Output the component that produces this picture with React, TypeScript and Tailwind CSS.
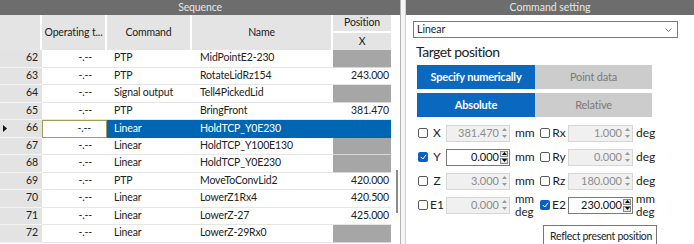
import React from 'react';

const ROWS = [
  { n: 62, cmd: 'PTP', name: 'MidPointE2-230', pos: null },
  { n: 63, cmd: 'PTP', name: 'RotateLidRz154', pos: '243.000' },
  { n: 64, cmd: 'Signal output', name: 'Tell4PickedLid', pos: null },
  { n: 65, cmd: 'PTP', name: 'BringFront', pos: '381.470' },
  { n: 66, cmd: 'Linear', name: 'HoldTCP_Y0E230', pos: '', selected: true },
  { n: 67, cmd: 'Linear', name: 'HoldTCP_Y100E130', pos: null },
  { n: 68, cmd: 'Linear', name: 'HoldTCP_Y0E230', pos: null },
  { n: 69, cmd: 'PTP', name: 'MoveToConvLid2', pos: '420.000' },
  { n: 70, cmd: 'Linear', name: 'LowerZ1Rx4', pos: '420.500' },
  { n: 71, cmd: 'Linear', name: 'LowerZ-27', pos: '425.000' },
  { n: 72, cmd: 'Linear', name: 'LowerZ-29Rx0', pos: null },
];

// tiny up/down spinner inside a numeric box
const Spinner: React.FC<{ enabled?: boolean }> = ({ enabled }) => (
  <div className="flex flex-col h-full w-[9px] justify-center gap-[1px] pr-[1px]">
    <div className={`h-[6px] flex items-center justify-center ${enabled ? 'bg-[#e6e6e6] border border-[#8a8a8a]' : ''}`}>
      <svg width="5" height="3" viewBox="0 0 5 3">
        <path d="M0 3 L2.5 0 L5 3 Z" fill={enabled ? '#000' : '#9a9a9a'} />
      </svg>
    </div>
    <div className={`h-[6px] flex items-center justify-center ${enabled ? 'bg-[#e6e6e6] border border-[#8a8a8a]' : ''}`}>
      <svg width="5" height="3" viewBox="0 0 5 3">
        <path d="M0 0 L2.5 3 L5 0 Z" fill={enabled ? '#000' : '#9a9a9a'} />
      </svg>
    </div>
  </div>
);

const NumBox: React.FC<{ value: string; enabled?: boolean; w: string }> = ({ value, enabled, w }) => (
  <div
    className={`${w} h-[17px] flex items-center border shrink-0 ${
      enabled ? 'bg-white border-[#7a7a7a] text-[#111]' : 'bg-[#f0f0f0] border-[#d6d6d6] text-[#8c8c8c]'
    }`}
  >
    <span className="flex-1 text-right pr-[1px] text-[11px]">{value}</span>
    <Spinner enabled={enabled} />
  </div>
);

const Check: React.FC<{ on?: boolean }> = ({ on }) =>
  on ? (
    <div className="w-[10px] h-[10px] shrink-0 rounded-[2px] bg-[#0a5fc0] flex items-center justify-center">
      <svg width="7" height="6" viewBox="0 0 7 6">
        <path d="M0.8 3 L2.8 5 L6.2 0.8" stroke="#fff" strokeWidth="1" fill="none" />
      </svg>
    </div>
  ) : (
    <div className="w-[10px] h-[10px] shrink-0 rounded-[2px] border border-[#5a5a5a] bg-white" />
  );

const Unit: React.FC<{ ext?: boolean; text: string; w: string }> = ({ ext, text, w }) =>
  ext ? (
    <div className={`${w} shrink-0 flex flex-col text-[11.5px] leading-[13px]`}>
      <span>mm</span>
      <span>deg</span>
    </div>
  ) : (
    <span className={`${w} shrink-0`}>{text}</span>
  );

const AxisRow: React.FC<{
  a: string; av: string; aOn?: boolean;
  b: string; bv: string; bOn?: boolean;
  ext?: boolean;
}> = ({ a, av, aOn, b, bv, bOn, ext }) => (
  <div className="flex items-center h-[24px] pl-[12px] text-[12px] text-[#222] whitespace-nowrap">
    <Check on={aOn} />
    <span className="w-[18px] shrink-0 text-center">{a}</span>
    <NumBox value={av} enabled={aOn} w="w-[64px]" />
    <span className="w-[5px] shrink-0" />
    <Unit ext={ext} text="mm" w="w-[25px]" />
    <Check on={bOn} />
    <span className="w-[18px] shrink-0 text-center">{b}</span>
    <NumBox value={bv} enabled={bOn} w="w-[65px]" />
    <span className="w-[3px] shrink-0" />
    <Unit ext={ext} text="deg" w="w-[26px]" />
  </div>
);

export default function App() {
  return (
    <div
      className="relative flex w-[694px] h-[244px] overflow-hidden bg-white whitespace-nowrap"
      style={{ fontFamily: 'Lato, "Noto Sans", sans-serif' }}
    >
      {/* Sequence panel */}
      <div className="w-[401px] flex flex-col border-r border-[#b4b4b4] text-[10.5px] tracking-[-0.15px] text-[#222]">
        <div className="h-[15px] bg-[#6d6d6d] text-[#e6e6e6] flex items-center justify-center text-[10.5px]">
          Sequence
        </div>
        <div className="flex h-[35px] bg-[#e4e4e4]">
          <div className="w-[42px] border-r-2 border-white" />
          <div className="w-[65px] border-r-2 border-white flex items-center justify-center">Operating t...</div>
          <div className="w-[85px] border-r-2 border-white flex items-center justify-center">Command</div>
          <div className="w-[141px] border-r-2 border-white flex items-center justify-center">Name</div>
          <div className="w-[58px] flex flex-col">
            <div className="h-[18px] border-b-2 border-white flex items-center justify-center">Position</div>
            <div className="flex-1 flex items-center justify-center">X</div>
          </div>
          <div className="flex-1 bg-white" />
        </div>
        <div className="relative flex-1">
          {ROWS.map((r) => (
            <div key={r.n} className="flex h-[17.5px]">
              <div className="relative w-[42px] bg-[#e3e3e3] border-b border-[#f4f4f4] flex items-center justify-end pr-[4px]">
                {r.selected && (
                  <svg className="absolute left-[3px] top-[5px]" width="4" height="7" viewBox="0 0 4 7">
                    <path d="M0 0 L4 3.5 L0 7 Z" fill="#111" />
                  </svg>
                )}
                {r.n}
              </div>
              <div
                className={`w-[65px] flex items-center justify-end pr-[15px] ${
                  r.selected ? 'border border-[#9d9d5a]' : 'border-b border-[#e6e6e6]'
                }`}
              >
                -.--
              </div>
              <div
                className={`w-[85px] flex items-center pl-[7px] ${
                  r.selected ? 'bg-[#0066b4] text-white' : 'border-b border-[#e6e6e6]'
                }`}
              >
                {r.cmd}
              </div>
              <div
                className={`w-[141px] flex items-center pl-[8px] ${
                  r.selected ? 'bg-[#0066b4] text-white' : 'border-b border-[#e6e6e6]'
                }`}
              >
                {r.name}
              </div>
              <div
                className={`w-[58px] flex items-center justify-end pr-[2px] ${
                  r.selected
                    ? 'bg-[#0066b4]'
                    : r.pos === null
                    ? 'bg-[#a6a6a6] border-b border-[#d8d8d8]'
                    : 'border-b border-[#e6e6e6]'
                }`}
              >
                {r.pos}
              </div>
              <div className="flex-1" />
            </div>
          ))}
          {/* scrollbar thumb */}
          <div className="absolute left-[396px] top-[120px] w-[2px] h-[43px] bg-[#8c8c8c]" />
        </div>
      </div>
      <div className="w-[5px] bg-[#f4f4f4] border-r border-[#cfcfcf]" />

      {/* Command setting panel */}
      <div className="flex-1 flex flex-col">
        <div className="h-[15px] bg-[#6d6d6d] text-[#e6e6e6] flex items-center justify-center text-[10.5px]">
          Command setting
        </div>
        <div className="ml-[7px] mt-[6px] w-[265px] h-[17px] border border-[#7a7a7a] flex items-center justify-between px-[3px] text-[10.5px] text-[#222]">
          <span>Linear</span>
          <svg width="7" height="4" viewBox="0 0 7 4" className="mr-[2px]">
            <path d="M0.5 0.5 L3.5 3.5 L6.5 0.5" stroke="#777" strokeWidth="0.9" fill="none" />
          </svg>
        </div>
        <div className="ml-[10px] mt-[5px] h-[18px] leading-[18px] text-[14px] tracking-[-0.5px] text-[#222]">Target position</div>
        <div className="ml-[11px] mt-[4px] flex h-[24px] w-[235px] text-[11px] tracking-[-0.2px] font-bold">
          <div className="w-[118px] bg-[#0a68be] text-white flex items-center justify-center">Specify numerically</div>
          <div className="flex-1 bg-[#cccccc] text-[#7a7a7a] font-normal flex items-center justify-center">Point data</div>
        </div>
        <div className="ml-[11px] mt-[4px] flex h-[24px] w-[235px] text-[11px] tracking-[-0.2px] font-bold">
          <div className="w-[118px] bg-[#0a68be] text-white flex items-center justify-center">Absolute</div>
          <div className="flex-1 bg-[#cccccc] text-[#7a7a7a] font-normal flex items-center justify-center">Relative</div>
        </div>
        <div className="mt-[4px] flex flex-col">
          <AxisRow a="X" av="381.470" b="Rx" bv="1.000" />
          <AxisRow a="Y" av="0.000" aOn b="Ry" bv="0.000" />
          <AxisRow a="Z" av="3.000" b="Rz" bv="180.000" />
          <AxisRow a="E1" av="0.000" b="E2" bv="230.000" bOn ext />
        </div>
      </div>

      {/* tooltip */}
      <div className="absolute left-[543px] top-[225px] h-[30px] border border-[#767676] bg-white text-[10.5px] tracking-[-0.3px] text-[#222] pl-[6px] pr-[4px] pt-[3px]">
        Reflect present position
      </div>
    </div>
  );
}
